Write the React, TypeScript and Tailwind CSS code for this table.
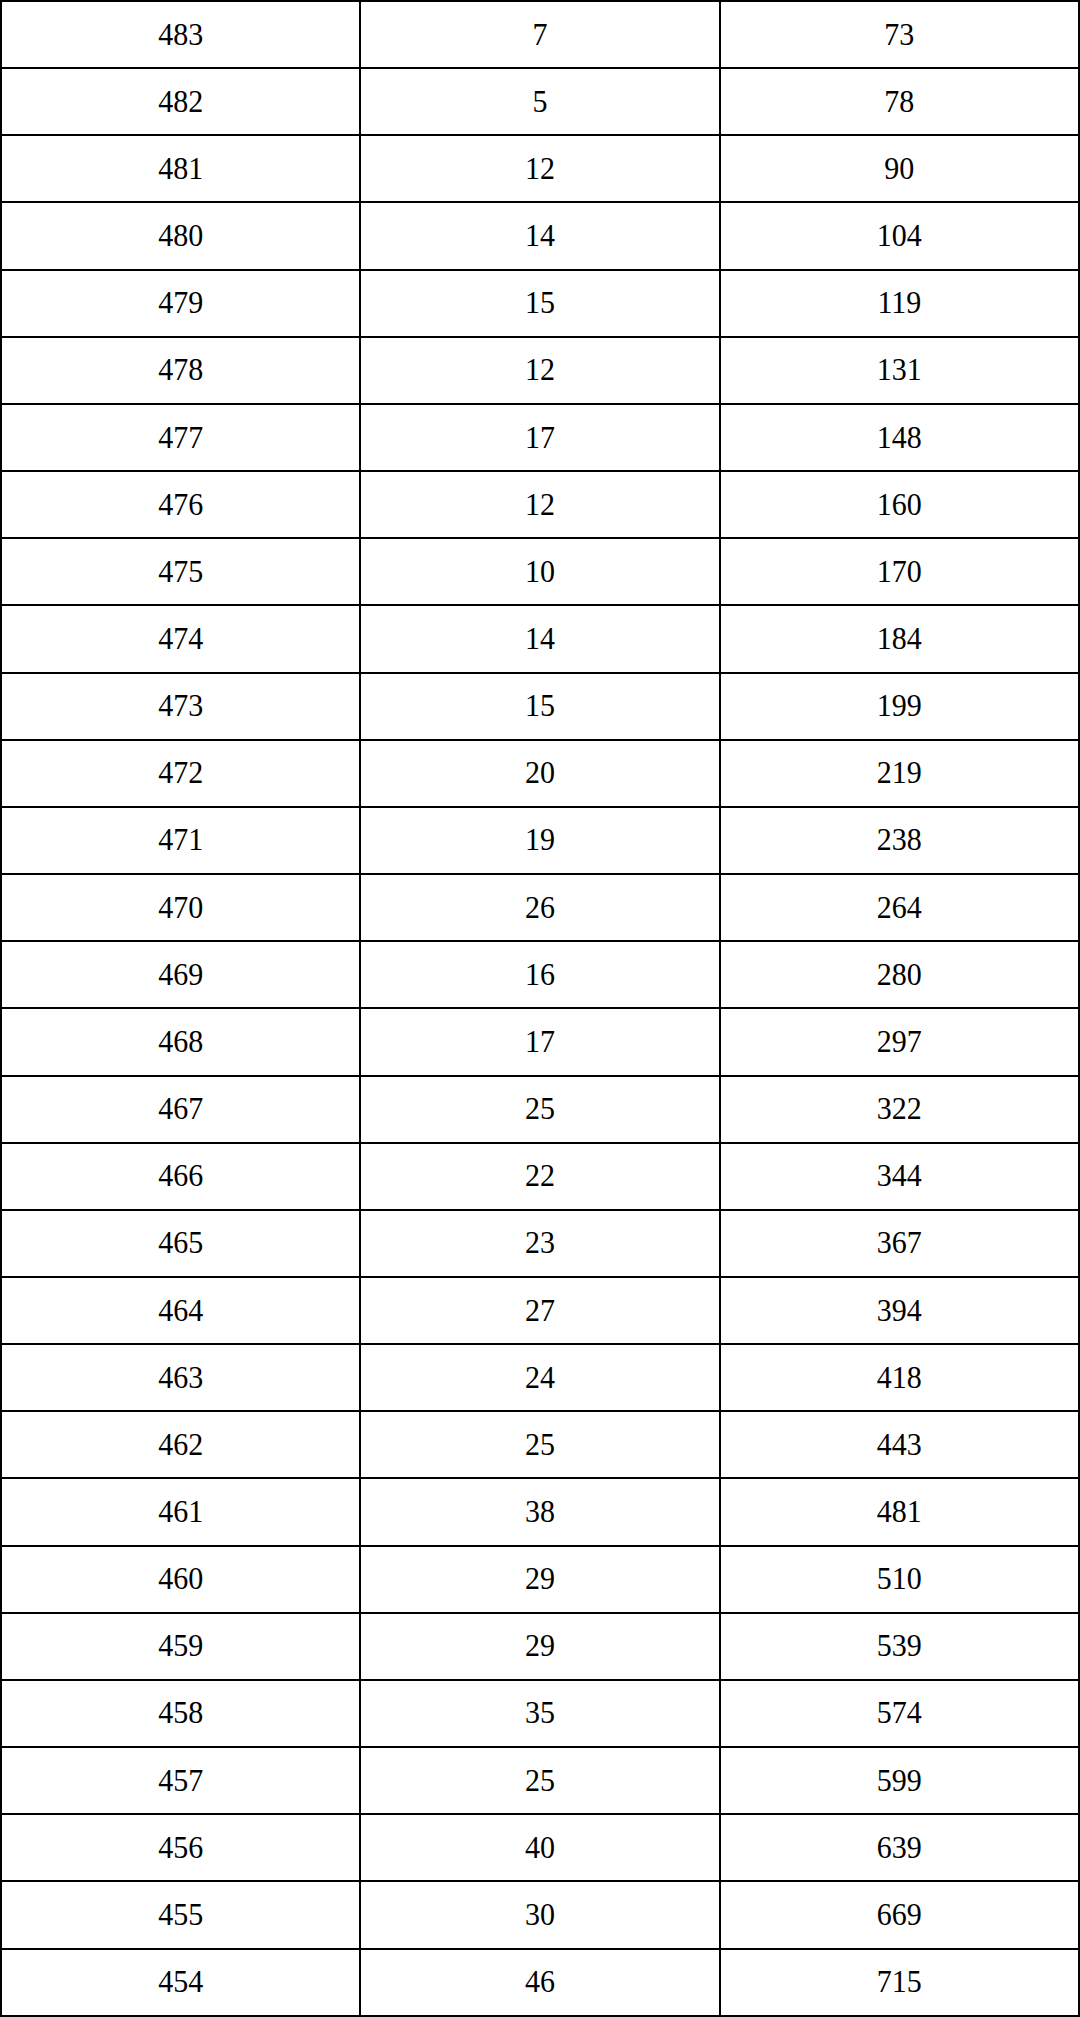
import React from "react";

const rows: [number, number, number][] = [
  [483, 7, 73],
  [482, 5, 78],
  [481, 12, 90],
  [480, 14, 104],
  [479, 15, 119],
  [478, 12, 131],
  [477, 17, 148],
  [476, 12, 160],
  [475, 10, 170],
  [474, 14, 184],
  [473, 15, 199],
  [472, 20, 219],
  [471, 19, 238],
  [470, 26, 264],
  [469, 16, 280],
  [468, 17, 297],
  [467, 25, 322],
  [466, 22, 344],
  [465, 23, 367],
  [464, 27, 394],
  [463, 24, 418],
  [462, 25, 443],
  [461, 38, 481],
  [460, 29, 510],
  [459, 29, 539],
  [458, 35, 574],
  [457, 25, 599],
  [456, 40, 639],
  [455, 30, 669],
  [454, 46, 715],
];

export default function App() {
  return (
    <div className="w-[1080px] h-[2017px] bg-white">
      <table className="w-full h-[2017px] table-fixed border-collapse border-2 border-black font-['Liberation_Serif',serif] text-[30px] text-black">
        <tbody>
          {rows.map((r) => (
            <tr key={r[0]}>
              {r.map((v, i) => (
                <td
                  key={i}
                  className="border-2 border-black text-center align-middle p-0 leading-none"
                >
                  <span className="inline-block scale-y-105">{v}</span>
                </td>
              ))}
            </tr>
          ))}
        </tbody>
      </table>
    </div>
  );
}
